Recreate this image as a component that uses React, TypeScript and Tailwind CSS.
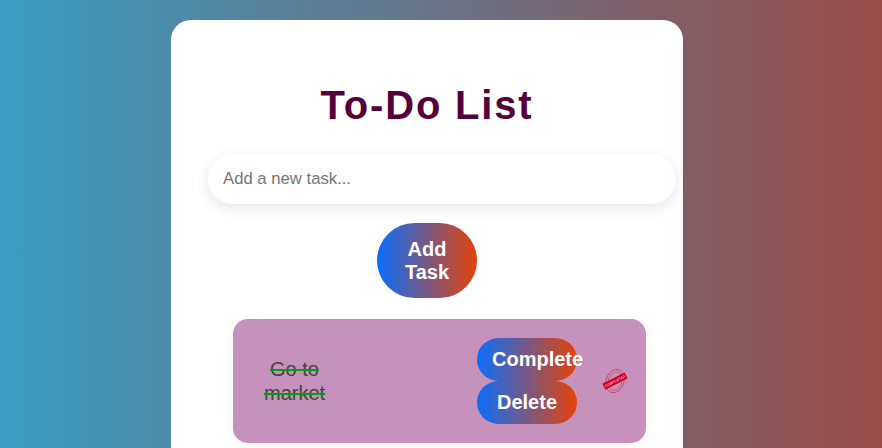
const buttonClass =
  'w-[100px] rounded-full bg-linear-to-r/srgb from-[#0a6efd] to-[#e64208] px-[15px] text-[20px] leading-[23px] font-bold text-white';

function CompletedStamp() {
  return (
    <svg width="26" height="26" viewBox="0 0 26 26" className="-ml-px shrink-0">
      <g fill="none" stroke="#d8284a" transform="rotate(20 13 13)">
        <ellipse cx="13" cy="13" rx="9" ry="12" strokeWidth="0.8" opacity="0.8" />
        <ellipse cx="13" cy="13" rx="6.8" ry="9.5" strokeWidth="0.7" opacity="0.7" />
      </g>
      <g transform="rotate(-27 13 13)">
        <rect x="0.5" y="9.8" width="25" height="6.6" fill="#cf0022" />
        <text
          x="13"
          y="14.4"
          textAnchor="middle"
          fontSize="3.6"
          fontWeight="700"
          fill="#f2a9b4"
          fontFamily="'Liberation Sans', sans-serif"
        >
          COMPLETED
        </text>
      </g>
    </svg>
  );
}

export default function App() {
  return (
    <div className="h-screen overflow-hidden bg-linear-to-r/srgb from-[#3a9cc1] to-[#994b49] pt-5 font-['Liberation_Sans',sans-serif]">
      <div className="ml-[171px] h-[500px] w-[512px] rounded-[20px] bg-white pt-[62px]">
        <h1 className="text-center text-[40px] font-bold leading-[46px] tracking-[1.8px] text-[#56003a]">
          To-Do List
        </h1>

        <input
          placeholder="Add a new task..."
          className="mt-[26px] ml-[37px] block h-[50px] w-[468px] rounded-full bg-white px-[15px] text-[16.7px] shadow-[0_4px_15px_rgba(0,0,0,0.1)] outline-none placeholder:text-[#757575]"
        />

        <div className="mt-[19px] flex justify-center">
          <button className={`${buttonClass} h-[75px]`}>Add Task</button>
        </div>

        <div className="mt-[21px] ml-[62px] flex h-[124px] w-[413px] items-center rounded-[15px] bg-[#c691ba] pl-[31px] pr-[18px] shadow-[0_4px_15px_rgba(0,0,0,0.05)]">
          <span className="w-[61px] text-center text-[20px] leading-6 text-[#444] line-through decoration-[#00a010] decoration-2">
            Go to market
          </span>
          <div className="ml-[152px] flex flex-col">
            <button className={`${buttonClass} h-[43px] text-left`}>Complete</button>
            <button className={`${buttonClass} h-[43px]`}>Delete</button>
          </div>
          <div className="ml-auto">
            <CompletedStamp />
          </div>
        </div>
      </div>
    </div>
  );
}
